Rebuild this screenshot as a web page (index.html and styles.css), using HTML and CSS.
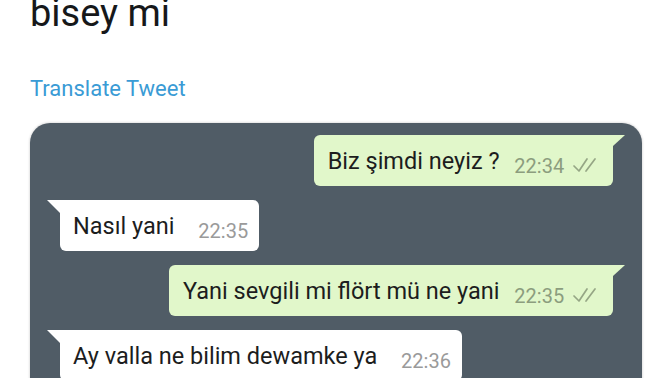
FILE: index.html
```html
<!DOCTYPE html>
<html lang="tr">
<head>
    <meta charset="UTF-8">
    <meta name="viewport" content="width=device-width, initial-scale=1.0">
    <title>bisey mi</title>
    <link rel="stylesheet" href="styles.css">
</head>
<body>
    <div class="tweet">
        <div class="tweet-text">bisey mi</div>
        <div class="translate">Translate Tweet</div>

        <div class="chat">
            <div class="msg out">
                <span class="txt">Biz şimdi neyiz ?</span>
                <span class="time">22:34</span>
                <svg class="ticks" width="26" height="16" viewBox="0 0 26 16"><path d="M2 9 L7 14 L15 2 M14 14 L23 2" fill="none" stroke="#95a685" stroke-width="1.7" stroke-linecap="round" stroke-linejoin="round"/></svg>
            </div>
            <div class="msg in">
                <span class="txt">Nasıl yani</span>
                <span class="time">22:35</span>
            </div>
            <div class="msg out">
                <span class="txt">Yani sevgili mi flört mü ne yani</span>
                <span class="time">22:35</span>
                <svg class="ticks" width="26" height="16" viewBox="0 0 26 16"><path d="M2 9 L7 14 L15 2 M14 14 L23 2" fill="none" stroke="#95a685" stroke-width="1.7" stroke-linecap="round" stroke-linejoin="round"/></svg>
            </div>
            <div class="msg in">
                <span class="txt">Ay valla ne bilim dewamke ya</span>
                <span class="time">22:36</span>
            </div>
        </div>
    </div>
</body>
</html>
```

FILE: styles.css
```css
*{
    margin:0;
    padding:0;
    box-sizing:border-box;
}
body{
    background:#fff;
    font-family:Roboto, "Noto Sans", sans-serif;
    overflow:hidden;
}
.tweet{
    padding-left:30px;
}
.tweet-text{
    font-size:38px;
    line-height:44px;
    color:#16181a;
    margin-top:-9px;
}
.translate{
    font-size:22px;
    line-height:26px;
    color:#3a9bd5;
    margin-top:41px;
}
.chat{
    margin-top:21px;
    width:612px;
    height:300px;
    background:#505c66;
    border-radius:20px 20px 0 0;
    box-shadow:0 0 2px 1px #e4e4e4;
    padding:12px 29px 0 30px;
    display:flex;
    flex-direction:column;
    align-items:flex-start;
    gap:14px;
}
.msg{
    position:relative;
    height:51px;
    padding:12px 11px 0 13px;
    border-radius:6px;
    font-size:23.5px;
    line-height:28px;
    color:#1c1d1d;
    white-space:nowrap;
}
.msg.in{
    background:#fff;
    border-top-left-radius:0;
}
.msg.in::before{
    content:"";
    position:absolute;
    left:-13px;
    top:0;
    border-top:13px solid #fff;
    border-left:13px solid transparent;
}
.msg.out{
    align-self:flex-end;
    background:#e1f7ca;
    border-top-right-radius:0;
    padding:12px 15px 0 14px;
}
.msg.out::after{
    content:"";
    position:absolute;
    right:-12px;
    top:0;
    border-top:11px solid #e1f7ca;
    border-right:12px solid transparent;
}
.time{
    display:inline-block;
    vertical-align:-4px;
    font-size:20px;
    color:#9a9a9a;
    margin-left:18px;
}
.out .time{
    color:#8c9d7e;
    margin-left:9px;
}
.ticks{
    vertical-align:-4px;
    margin-left:2px;
}
```
